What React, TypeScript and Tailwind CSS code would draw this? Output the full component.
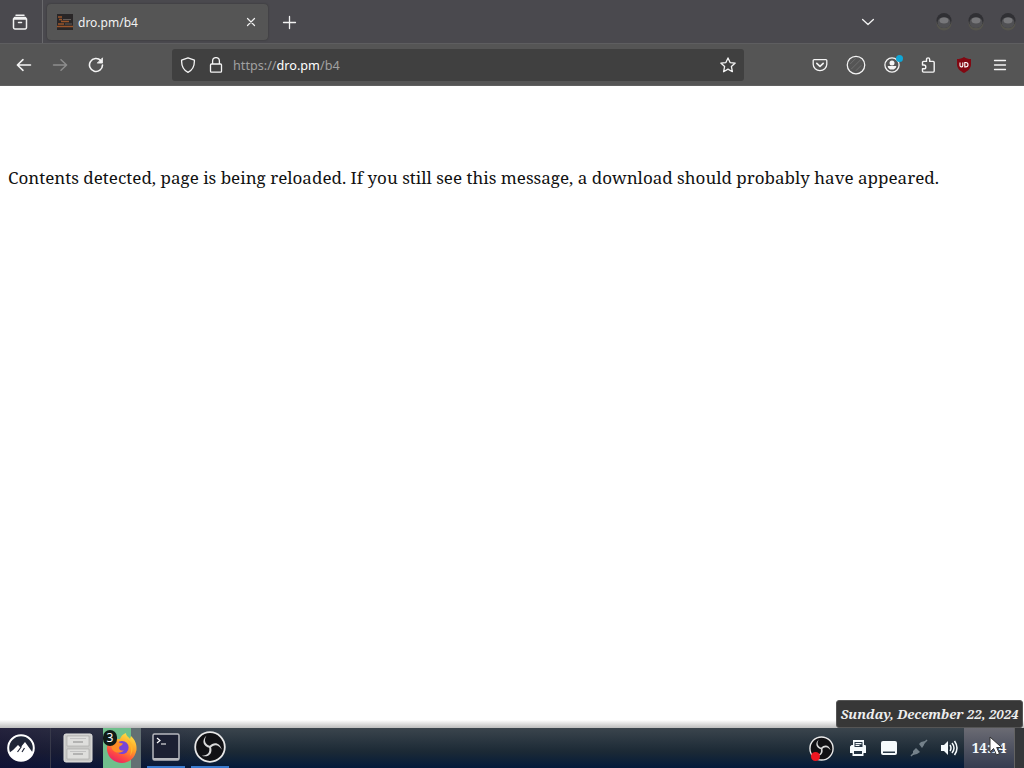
import type { ReactNode } from "react";

type IconProps = {
	size?: number;
	className?: string;
	children: ReactNode;
};

function Icon({ size = 16, className = "", children }: IconProps) {
	return (
		<svg
			width={size}
			height={size}
			viewBox="0 0 16 16"
			fill="none"
			stroke="currentColor"
			strokeWidth="1.3"
			strokeLinecap="round"
			strokeLinejoin="round"
			className={`block shrink-0 ${className}`}
		>
			{children}
		</svg>
	);
}

function WindowButton() {
	return (
		<svg width="18" height="20" viewBox="0 0 18 20" className="block">
			<ellipse cx="9" cy="11.5" rx="7.5" ry="7" fill="#55544d" />
			<circle cx="9" cy="8.5" r="7.5" fill="#303034" />
			<ellipse cx="9" cy="10.5" rx="6.5" ry="5.5" fill="#505053" />
			<ellipse cx="9" cy="8.5" rx="4.5" ry="3" fill="#77777a" />
		</svg>
	);
}

function TabStrip() {
	return (
		<div className="flex h-11 shrink-0 items-center border-b border-[#5e5e60] bg-[#4a494e] text-[#f2f2f2]">
			<div className="flex h-full w-[43px] items-center border-r border-[#69696c] pl-3">
				<Icon>
					<path strokeWidth="1.5" d="M4 1.2h8M1.5 5h13v8.6a1.3 1.3 0 0 1-1.3 1.3H2.8a1.3 1.3 0 0 1-1.3-1.3zM1.5 5l1.200-1.500h10.600L14.500 5M6.500 8.600h3" />
				</Icon>
			</div>
			<div className="ml-1 flex h-9 w-[221px] items-center rounded-[4px] bg-[#555555] pl-2.5 shadow-[0_0_2px_#333]">
				<svg width="16" height="16" viewBox="0 0 16 16" className="block">
					<path fill="#292627" d="M0 0h16v16H0z" />
					<path stroke="#9b552b" strokeWidth="1.3" d="M1 3h4M2 5.5h3M4 7.5h8M1 10h6M0 12.5h16" />
					<path stroke="#625b58" d="M6 5.5h8M8 10h7" />
				</svg>
				<span className="ml-[5px] flex-1 pt-0.5 text-[12px]">dro.pm/b4</span>
				<Icon className="mr-[9px]">
					<path strokeWidth="1.2" d="m4.500 4.500 7 7M11.500 4.500l-7 7" />
				</Icon>
			</div>
			<Icon className="ml-[13px]">
				<path d="M8.5 2.500v12M2.500 8.500h12" />
			</Icon>
			<Icon className="ml-auto">
				<path d="m2.6 5.5 5.4 5 5.4-5" />
			</Icon>
			<div className="ml-[59px] flex gap-3.5 pr-[7px]">
				<WindowButton />
				<WindowButton />
				<WindowButton />
			</div>
		</div>
	);
}

function NavBar() {
	return (
		<div className="flex h-[42px] shrink-0 items-center border-b border-[#606060] bg-[#555555] text-[#f4f4f4]">
			<div className="flex w-[172px] gap-5 pl-4">
				<Icon>
					<path strokeWidth="1.6" d="M14.5 8h-13M7 2.7 1.4 8 7 13.3" />
				</Icon>
				<Icon className="text-[#8d8d8d]">
					<path strokeWidth="1.5" d="M1.5 8h13M9 2.7 14.6 8 9 13.3" />
				</Icon>
				<Icon>
					<path strokeWidth="1.6" d="M12.8 3.6A6.5 6.5 0 1 0 14.5 8" />
					<path fill="currentColor" strokeWidth=".8" d="M14.5 1.2v4.9H9.6z" />
				</Icon>
			</div>
			<div className="flex h-8 w-[572px] items-center rounded-[3px] bg-[#404040] px-2">
				<Icon>
					<path d="m8 .8 6.4 2.4C14.6 8.8 12 13.4 8 15.3 4 13.4 1.4 8.8 1.6 3.2z" />
				</Icon>
				<Icon className="ml-3">
					<path d="M4.6 7V4a3.4 3.4 0 0 1 6.8 0v3M3.5 7h9a1 1 0 0 1 1 1v6.2a1 1 0 0 1-1 1h-9a1 1 0 0 1-1-1V8a1 1 0 0 1 1-1z" />
				</Icon>
				<span className="ml-[9px] flex-1 pt-0.5 text-[12.65px] text-[#a0a0a0]">
					https://<span className="text-white">dro.pm</span>/b4
				</span>
				<Icon>
					<path d="m8 .9 2.1 4.7 5.1.5-3.8 3.5 1 5.1L8 12.1l-4.4 2.6 1-5.1L.8 6.1l5.1-.5z" />
				</Icon>
			</div>
			<div className="ml-auto flex items-center pr-4">
				<Icon>
					<path d="M2.1 2.6h11.8a.9.9 0 0 1 .9.9v3.8a6.8 6.3 0 0 1-13.6 0V3.5a.9.9 0 0 1 .9-.9z" />
					<path strokeWidth="1.6" d="m4.8 6.4 3.2 3 3.2-3" />
				</Icon>
				<Icon size={20} className="ml-[18px]">
					<circle cx="8" cy="8" r="7" strokeWidth="1" />
					<path stroke="#777" strokeWidth=".6" d="m3.5 7 4-4M4.5 11l7-7M8 12.5l4-4" />
				</Icon>
				<div className="relative ml-[18px]">
					<Icon>
						<circle cx="8" cy="8" r="7.1" />
						<circle cx="8" cy="5.9" r="2.5" fill="currentColor" stroke="none" />
						<path fill="currentColor" stroke="none" d="M3.7 8.9h8.6c0 2-1.8 3.7-4.3 3.7S3.7 10.9 3.7 8.9z" />
					</Icon>
					<span className="absolute -top-[2px] -right-[3px] size-[7px] rounded-full bg-[#10a7d7]" />
				</div>
				<Icon className="ml-5">
					<path strokeWidth="1.4" d="M2.500 8V5.400a1 1 0 0 1 1-1h3V2.500a1.600 1.600 0 0 1 3.200 0v1.900h3.500a1 1 0 0 1 1 1v8.700a1 1 0 0 1-1 1H3.500a1 1 0 0 1-1-1v-2.300h1.400a1.900 1.900 0 0 0 0-3.800z" />
				</Icon>
				<svg width="16" height="16" viewBox="0 0 16 16" fill="none" className="ml-5 block">
					<path fill="#820812" d="M8 0c2 1.500 4.500 2 7 2v5.300c0 4-3 6.800-7 8.700-4-1.900-7-4.700-7-8.700V2c2.500 0 5-.5 7-2z" />
					<path stroke="white" strokeWidth="1.1" d="M4 5.500v3a1.400 1.400 0 0 0 2.800 0v-3M8.800 5.500v4.400h1a2.200 2.200 0 0 0 0-4.400z" />
				</svg>
				<Icon className="ml-5">
					<path d="M2.500 3.500h11M2.500 8h11M2.500 12.500h11" />
				</Icon>
			</div>
		</div>
	);
}

function ObsLogo({ size }: { size: number }) {
	return (
		<svg width={size} height={size} viewBox="0 0 32 32" fill="none" className="block">
			<circle cx="16" cy="16" r="14.8" fill="#111114" stroke="#e8e8e8" strokeWidth="1.8" />
			<g fill="#d8d8d8">
				<path d="M12.500 4.500C7.500 9 8.500 15.500 16 17l1-1.800C11 14 9.500 9.500 12.500 4.500z" />
				<path d="M12.500 4.500C7.500 9 8.500 15.500 16 17l1-1.800C11 14 9.500 9.500 12.500 4.500z" transform="rotate(120 16 16)" />
				<path d="M12.500 4.500C7.500 9 8.500 15.500 16 17l1-1.800C11 14 9.500 9.500 12.500 4.500z" transform="rotate(240 16 16)" />
			</g>
		</svg>
	);
}

function Firefox() {
	return (
		<svg width="32" height="32" viewBox="0 0 32 32" className="block">
			<defs>
				<linearGradient id="flame" x1=".8" y1="0" x2=".3" y2="1">
					<stop offset="0" stopColor="#ffe84a" />
					<stop offset=".45" stopColor="#ff9b25" />
					<stop offset=".75" stopColor="#ff4b43" />
					<stop offset="1" stopColor="#e82167" />
				</linearGradient>
			</defs>
			<path fill="url(#flame)" d="M3 9c1-2 2-3 3-4l1 3c2-1 5-1 7-1 1-3 3-5 6-6 0 3 3 4 4 6l1-3c4 4 6 8 5.500 14C29 26 23 31 16 31S2 26 1 18c-.3-3 .5-6 2-9z" />
			<circle cx="16" cy="15.500" r="6.600" fill="#7844d8" />
			<path fill="#ff8c28" d="M5 10c4-2 7-1 9 1l3 .5c-1 2-2.500 2-3.500 3-1.500 3 1.500 5 4.500 3.500-3 4.500-10 3-12-1-1-3-1-4-1-7z" />
			<path fill="#ffb52b" d="M21 7c7 4 7 12 3 17 2-6 1-11-3-17z" />
		</svg>
	);
}

function Launchers() {
	return (
		<div className="flex h-full items-center bg-linear-to-r from-[#160c32]/60 to-transparent">
			<div className="flex h-full w-[51px] items-center border-r border-[#37394a] pl-[7px]">
				<svg width="28" height="28" viewBox="0 0 28 28" fill="none" className="block">
					<circle cx="14" cy="14" r="12.8" fill="#202638" stroke="white" strokeWidth="2" />
					<path fill="white" d="m2 19 4-3 5-5 2.500 2.500L18 8l8 11c-4 10-20 10-24 0z" />
					<path stroke="#202638" strokeWidth="1.2" d="m10.500 18 4-5.500M15 18l2.500-4" />
				</svg>
			</div>
			<svg width="30" height="30" viewBox="0 0 30 30" fill="none" className="ml-3 block">
				<rect x="1" y="1" width="28" height="28" rx="2" fill="#c9c9c7" stroke="#e4e4e2" />
				<path fill="#dededc" stroke="#a5a5a5" strokeWidth=".6" d="M4 3h22v10H4zM4 16h22v10H4z" />
				<path stroke="#888" strokeWidth="1.1" d="M10 9h10M10 21h10" />
				<path stroke="#c2c2c2" d="M7 5.500h16M7 18.500h16" />
			</svg>
			<div className="relative ml-2.5 flex h-full w-[38px] items-center bg-linear-to-r from-[#70bf8c] from-75% to-[#637073] to-75% pl-[3px]">
				<Firefox />
				<span className="absolute top-0.5 left-0 flex h-4 w-[14px] items-center justify-center rounded-full bg-[#101a17] text-[12px] text-white">
					3
				</span>
			</div>
			<div className="ml-1.5 flex h-full w-[38px] items-center justify-center border-b-2 border-[#397bd0]">
				<svg width="28" height="28" viewBox="0 0 28 28" fill="none" className="block">
					<rect x="1" y="1" width="26" height="26" rx="1.5" fill="#1c2033" stroke="#b7b8be" strokeWidth="1.5" />
					<path stroke="#b7b8be" strokeWidth="2" d="M1 26h26" />
					<path stroke="white" strokeWidth="1.2" d="m5 5 3 2.500L5 10M9 11h5" />
				</svg>
			</div>
			<div className="ml-1.5 flex h-full w-[38px] items-center justify-center border-b-2 border-[#397bd0]">
				<ObsLogo size={32} />
			</div>
		</div>
	);
}

function Tray() {
	return (
		<div className="flex h-full items-center text-[#f5fafc]">
			<div className="relative mr-[15px]">
				<ObsLogo size={25} />
				<span className="absolute bottom-0 left-0.5 size-[9px] rounded-full bg-[#ed1721]" />
			</div>
			<svg width="18" height="18" viewBox="0 0 18 18" fill="currentColor" className="block">
				<path d="M4 1h11v5h1.500L17 7.500V14h-2.500v3h-11v-3H1V7.500L2.500 6H4z" />
				<path fill="#233342" d="M5.500 3h8v5h-8zM5 12h8v3H5z" />
				<path d="M6.500 4h6v1.200h-6zM6.500 6h4v1h-4z" />
			</svg>
			<svg width="16" height="14" viewBox="0 0 16 14" fill="currentColor" className="ml-[14px] block">
				<rect width="16" height="14" rx="2" />
				<path fill="#293947" d="M2 10.500h12V12H2z" />
			</svg>
			<svg width="18" height="18" viewBox="0 0 18 18" className="ml-[13px] block text-[#74818a]">
				<path stroke="currentColor" strokeWidth="1.5" d="m1 17 4-4M13 5l4-4" />
				<path fill="currentColor" d="m3 12 3-3 4 4-3 2-4 1zM9 5l2-2 4-1-1 4-2 3z" />
			</svg>
			<svg width="18" height="18" viewBox="0 0 18 18" fill="none" stroke="currentColor" strokeWidth="1.5" className="ml-3 block">
				<path fill="currentColor" stroke="none" d="M1 6h3l4-4v14l-4-4H1z" />
				<path d="M10 6q2 3 0 6M12 4q4 5 0 10M14.500 2q5 7 0 14" />
			</svg>
			<div className="relative ml-1.5 flex h-full w-[50px] items-center justify-center bg-linear-to-b from-[#6b6b73] to-[#353c50] pt-px font-['Noto_Serif','DejaVu_Serif',serif] text-[13.5px] font-bold">
				14:14
				<svg width="14" height="20" viewBox="0 0 14 20" className="absolute top-[8px] left-[25px]">
					<path fill="white" stroke="#333" d="M1 1v15l3.600-3.500L7.500 19l3-1.400-2.800-6.100h5z" />
				</svg>
				<div className="absolute right-[-9px] bottom-10 flex h-[28px] w-[187px] items-center justify-center rounded-[3px] border border-[#555] bg-[#373737] pt-0.5 font-['Noto_Serif','DejaVu_Serif',serif] text-[13.15px] font-bold whitespace-nowrap text-[#eeeeee] italic">
					Sunday, December 22, 2024
				</div>
			</div>
			<div className="h-full w-2.5 border-l border-[#636363] bg-[#35373a]" />
		</div>
	);
}

export default function App() {
	return (
		<div className="flex h-screen flex-col overflow-hidden bg-white font-['Noto_Sans','Open_Sans',sans-serif]">
			<TabStrip />
			<NavBar />
			<main className="flex-1 px-2 pt-20">
				<p className="font-['Noto_Serif','DejaVu_Serif',serif] text-[17px] leading-6 whitespace-nowrap text-[#111]">
					Contents detected, page is being reloaded. If you still see this message, a download should probably have appeared.
				</p>
			</main>
			<div className="h-2 bg-linear-to-b from-white to-[#bdbdbd]" />
			<footer className="flex h-10 shrink-0 items-center justify-between bg-linear-to-b from-[#3b454d] via-[#1b2935] via-60% to-[#041a3b]">
				<Launchers />
				<Tray />
			</footer>
		</div>
	);
}
